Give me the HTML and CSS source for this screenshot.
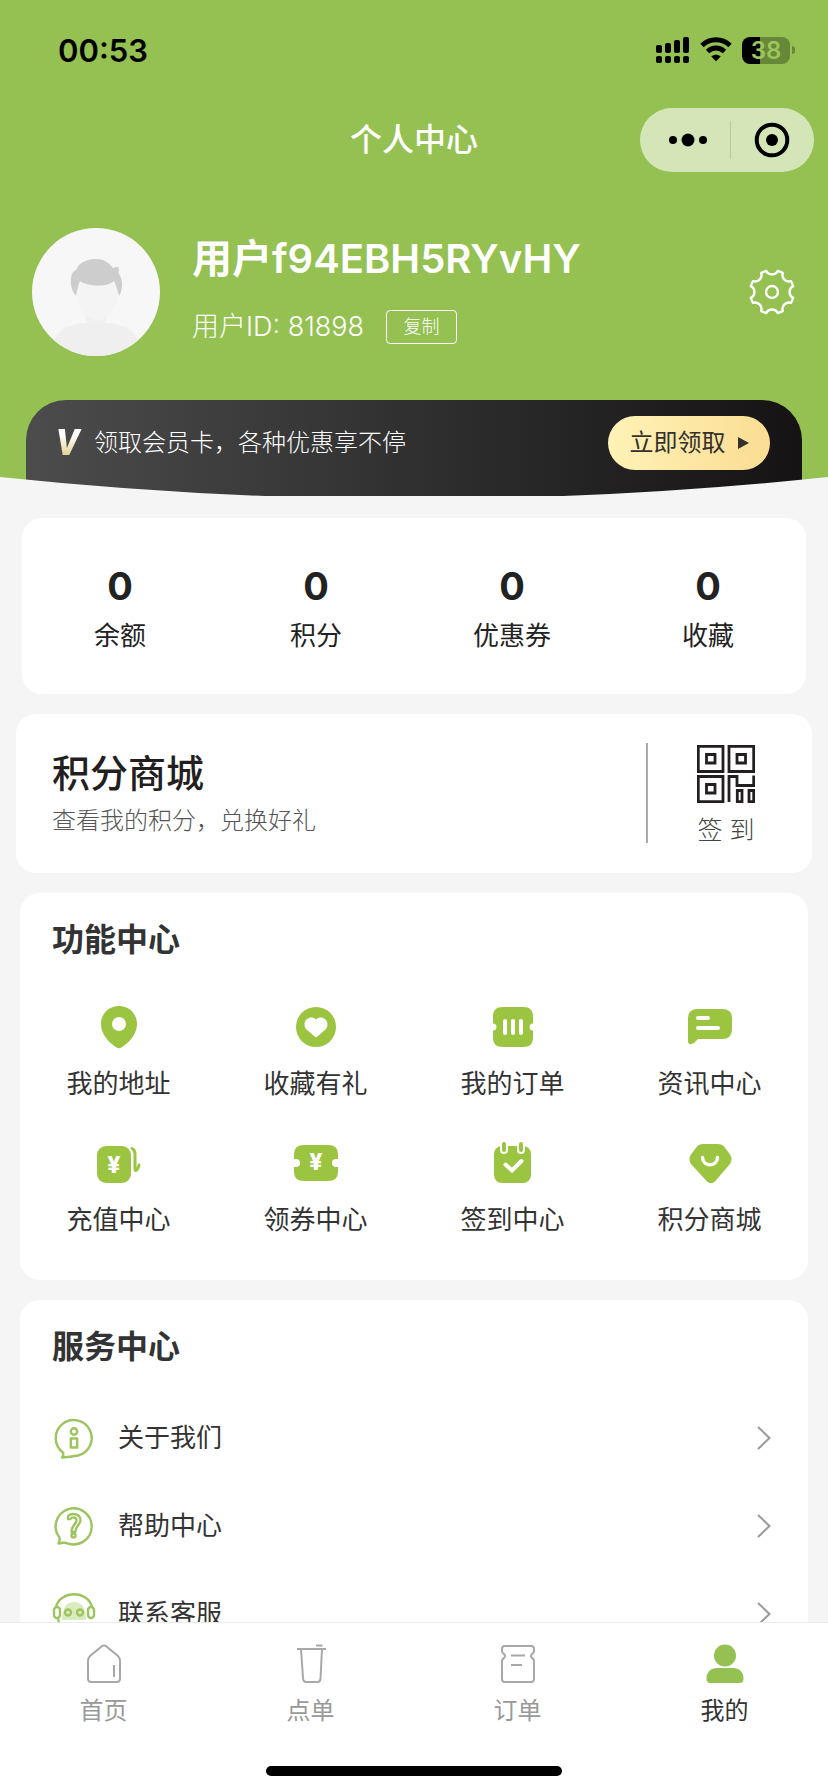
FILE: index.html
```html
<!DOCTYPE html>
<html lang="zh-CN">
<head>
<meta charset="utf-8">
<meta name="viewport" content="width=device-width, initial-scale=1">
<title>个人中心</title>
<link rel="stylesheet" href="styles.css">
</head>
<body>
<div class="app">
  <main class="content">
    <header class="hero">
      <div class="status">
        <time class="clock">00:53</time>
        <div class="indicators">
          <svg width="34" height="28" viewBox="0 0 34 28" aria-hidden="true">
            <rect x="0" y="9" width="6" height="8" rx="2"/><rect x="9" y="7" width="6" height="10" rx="2"/><rect x="18" y="4" width="6" height="13" rx="2"/><rect x="27" y="1" width="6" height="16" rx="2"/>
            <rect x="0" y="20" width="6" height="7" rx="2"/><rect x="9" y="20" width="6" height="7" rx="2"/><rect x="18" y="20" width="6" height="7" rx="2"/><rect x="27" y="20" width="6" height="7" rx="2"/>
          </svg>
          <svg width="32" height="28" viewBox="0 0 32 28" aria-hidden="true">
            <path d="M2 9.5C10 1.8 22 1.8 30 9.500M7.500 15.500C12.500 10.800 19.500 10.800 24.500 15.500" fill="none" stroke="#000" stroke-width="4.800"/>
            <path d="M16 25.200L11.300 20.500C14 18 18 18 20.700 20.500Z"/>
          </svg>
          <div class="battery"><span class="battery-body">38</span><span class="battery-tip"></span></div>
        </div>
      </div>
      <div class="navbar">
        <h1 class="page-title">个人中心</h1>
        <div class="capsule">
          <button class="capsule-btn capsule-more" type="button" aria-label="更多">
            <svg width="40" height="16" viewBox="0 0 40 16"><circle cx="5" cy="8" r="4"/><circle cx="20" cy="8" r="6.500"/><circle cx="35" cy="8" r="4"/></svg>
          </button>
          <span class="capsule-line"></span>
          <button class="capsule-btn" type="button" aria-label="关闭">
            <svg width="36" height="36" viewBox="0 0 36 36"><circle cx="18" cy="18" r="15.300" fill="none" stroke="#000" stroke-width="4"/><circle cx="18" cy="18" r="6"/></svg>
          </button>
        </div>
      </div>
      <section class="profile">
        <svg class="avatar" viewBox="0 0 128 128" role="img" aria-label="头像">
          <rect width="128" height="128" fill="#f7f7f7"/>
          <path d="M22 128V113C25 101 38 96 53 95H75C91 96 103 101 106 113V128Z" fill="#efefef"/>
          <path d="M54 82H74V93C71 97 57 97 54 93Z" fill="#f0f0f0"/>
          <path d="M45 62C45 40 86 40 86 62C86 80 76 92 65 92C54 92 45 80 45 62Z" fill="#f4f4f4"/>
          <path d="M44 68C38 62 38 50 40 46C41 43 44 43 45 40C49 32 60 31 64 31C73 31 78 36 81 40C83 40 85 38 86 39C88 41 86 44 87 46C91 51 91 62 87 68C86 63 84 57 82 53C75 60 53 58 48 53C46 57 45 63 44 68Z" fill="#cdcdcd"/>
        </svg>
        <div class="identity">
          <h2 class="username">用户f94EBH5RYvHY</h2>
          <div class="id-row"><span>用户ID: 81898</span><button class="copy" type="button">复制</button></div>
        </div>
        <button class="settings" type="button" aria-label="设置">
          <svg width="48" height="48" viewBox="0 0 48 48" fill="none" stroke="#fff" stroke-width="2.400" stroke-linejoin="round"><path d="M29.900 2.800L34.800 4.900A6.600 6.600 0 0 0 43.100 13.200L45.200 18.100A6.600 6.600 0 0 0 45.200 29.900L43.100 34.800A6.600 6.600 0 0 0 34.800 43.100L29.900 45.200A6.600 6.600 0 0 0 18.100 45.200L13.200 43.100A6.600 6.600 0 0 0 4.900 34.800L2.800 29.900A6.600 6.600 0 0 0 2.800 18.100L4.900 13.200A6.600 6.600 0 0 0 13.200 4.900L18.100 2.800A6.600 6.600 0 0 0 29.900 2.800Z"/><circle cx="24" cy="24" r="6"/></svg>
        </button>
      </section>
      <section class="member">
        <span class="member-mark">V</span>
        <p class="member-text">领取会员卡，各种优惠享不停</p>
        <button class="claim" type="button">立即领取<svg width="11" height="12" viewBox="0 0 11 12" aria-hidden="true"><path d="M0 0L11 6L0 12Z" fill="#33302e"/></svg></button>
      </section>
      <svg class="curve" viewBox="0 0 828 20" preserveAspectRatio="none" aria-hidden="true"><path d="M0 0Q414 46 828 0V20H0Z" fill="#f5f5f5"/></svg>
    </header>

    <section class="card stats">
      <a class="stat" href="#balance"><strong class="stat-num">0</strong><span class="stat-label">余额</span></a>
      <a class="stat" href="#points"><strong class="stat-num">0</strong><span class="stat-label">积分</span></a>
      <a class="stat" href="#coupons"><strong class="stat-num">0</strong><span class="stat-label">优惠券</span></a>
      <a class="stat" href="#favorites"><strong class="stat-num">0</strong><span class="stat-label">收藏</span></a>
    </section>

    <section class="card mall">
      <a class="mall-info" href="#mall"><h2 class="mall-title">积分商城</h2><p class="mall-sub">查看我的积分，兑换好礼</p></a>
      <a class="checkin" href="#checkin">
        <svg width="58" height="58" viewBox="0 0 58 58" fill="none" stroke="#231f20" stroke-width="2.800" aria-hidden="true">
          <path d="M1.300 1.300H26V26.500H1.300ZM9.500 9.500H18V18H9.500ZM32 1.300H56.700V26.500H32ZM40 9.500H48.500V18H40ZM1.300 31.500H26V56.700H1.300ZM9.500 39.500H18V48H9.500ZM32 57V31.500H40V40.500H56.700V30.500M40.300 45.500H45V56.700H40.300ZM52 45.500H56.700V56.700H52Z"/>
        </svg>
        <span class="checkin-label">签 到</span>
      </a>
    </section>

    <section class="card features">
      <h2 class="card-title">功能中心</h2>
      <nav class="grid">
        <a class="feature" href="#address">
          <svg class="feature-icon" viewBox="0 0 48 48"><path fill-rule="evenodd" d="M24 3C34.500 3 42 11 42 21C42 31 34 40 26.500 44.500Q24 46 21.500 44.500C14 40 6 31 6 21C6 11 13.500 3 24 3ZM24 14A7 7 0 1 0 24 28A7 7 0 1 0 24 14Z"/></svg>
          <span>我的地址</span></a>
        <a class="feature" href="#gift">
          <svg class="feature-icon" viewBox="0 0 48 48"><circle cx="24" cy="24" r="20"/><path fill="#fff" d="M24 16.500C27 13.500 31 14.500 33 16C36.500 19 36 24 33.500 26.500L25.300 33.500Q24 34.500 22.700 33.500L14.500 26.500C12 24 11.500 19 15 16C17 14.500 21 13.500 24 16.500Z"/></svg>
          <span>收藏有礼</span></a>
        <a class="feature" href="#orders">
          <svg class="feature-icon" viewBox="0 0 48 48"><path d="M14 4H34C41 4 44 7 44 14V20.500A3.500 3.500 0 0 0 44 27.500V34C44 41 41 44 34 44H14C7 44 4 41 4 34V27.500A3.500 3.500 0 0 0 4 20.500V14C4 7 7 4 14 4Z"/><path d="M16 18V30M24 18V30M32 18V30" stroke="#fff" stroke-width="4" stroke-linecap="round"/></svg>
          <span>我的订单</span></a>
        <a class="feature" href="#news">
          <svg class="feature-icon" viewBox="0 0 48 48"><path d="M12 6H36Q46 6 46 15V26Q46 36 36 36H12L8 40Q2 43 2 38V15Q2 6 12 6Z"/><path d="M12 15H22M12 25H32" stroke="#fff" stroke-width="4" stroke-linecap="round"/></svg>
          <span>资讯中心</span></a>
        <a class="feature" href="#recharge">
          <svg class="feature-icon" viewBox="0 0 48 48"><rect x="2" y="7" width="34" height="37" rx="9"/><path d="M37 9.500C40 11 40 13 40 16V30C40 33 43 31 44 26" fill="none" stroke="#9bc441" stroke-width="3" stroke-linecap="round" stroke-linejoin="round"/><text class="yen" x="19" y="34">¥</text></svg>
          <span>充值中心</span></a>
        <a class="feature" href="#voucher">
          <svg class="feature-icon" viewBox="0 0 48 48"><path d="M12 6H36Q46 6 46 15V20H44A4 4 0 0 0 44 28H46V33Q46 42 36 42H12Q2 42 2 33V28H4A4 4 0 0 0 4 20H2V15Q2 6 12 6Z"/><text class="yen" x="24" y="31">¥</text></svg>
          <span>领券中心</span></a>
        <a class="feature" href="#signin">
          <svg class="feature-icon" viewBox="0 0 48 48"><rect x="5" y="7" width="37" height="37" rx="8"/><path d="M15 4V11M32 4V11" stroke="#fff" stroke-width="8" stroke-linecap="round"/><path d="M15 5V11M32 5V11" stroke="#9bc441" stroke-width="4" stroke-linecap="round"/><path d="M16.500 25.500L23 31.500L32.500 22" fill="none" stroke="#fff" stroke-width="4" stroke-linecap="round" stroke-linejoin="miter"/></svg>
          <span>签到中心</span></a>
        <a class="feature" href="#shop">
          <svg class="feature-icon" viewBox="0 0 48 48"><path d="M17 5H32Q36 5 38.500 8L44 15.500Q47 20 44 25L29 42.500Q25 46 21 42.500L5 25Q2 20 5 15.500L10.500 8Q13 5 17 5Z"/><path d="M16.500 18.500C17 28 31 28 31.500 18.500" fill="none" stroke="#fff" stroke-width="3.500" stroke-linecap="round"/></svg>
          <span>积分商城</span></a>
      </nav>
    </section>

    <section class="card services">
      <h2 class="card-title">服务中心</h2>
      <nav class="service-list">
        <a class="service" href="#about">
          <svg class="service-icon" viewBox="0 0 44 44"><path d="M11 36.500A18 18 0 1 1 26 39.500Q18 41 10 41.500Q12 39.500 11 36.500Z"/><circle cx="22" cy="15.500" r="3.200"/><rect x="18.800" y="22.500" width="6.400" height="9"/></svg>
          <span class="service-name">关于我们</span>
          <svg class="chevron" viewBox="0 0 16 26"><path d="M2 2L13.500 13L2 24"/></svg></a>
        <a class="service" href="#help">
          <svg class="service-icon" viewBox="0 0 44 44"><path d="M7.500 33.500A18 18 0 1 1 16 39.500Q12 38 6.500 39.500Q8 36.500 7.500 33.500Z"/><path d="M16 15V12C19 9 28 9 28.500 16C28.500 21 23 22 23.500 28H19.500C19 22 24.500 20 24.500 16.500C24.500 13 20 12.500 18.500 15Z"/><circle cx="21.500" cy="31.500" r="2"/></svg>
          <span class="service-name">帮助中心</span>
          <svg class="chevron" viewBox="0 0 16 26"><path d="M2 2L13.500 13L2 24"/></svg></a>
        <a class="service" href="#contact">
          <svg class="service-icon" viewBox="0 0 44 44"><path d="M22 10C33 10 34 22 34 28H10C10 22 11 10 22 10Z" fill="#d9ebbf" stroke="none"/><path d="M4 15C8 -2 36 -2 40 15"/><rect x="2" y="15" width="6" height="11" rx="3"/><rect x="36" y="15" width="6" height="11" rx="3"/><circle cx="16" cy="20.500" r="3"/><circle cx="28" cy="20.500" r="3"/><path d="M6 27C8 36 15 38 20 38"/></svg>
          <span class="service-name">联系客服</span>
          <svg class="chevron" viewBox="0 0 16 26"><path d="M2 2L13.500 13L2 24"/></svg></a>
      </nav>
    </section>
  </main>

  <footer class="tabbar">
    <nav class="tabs">
      <a class="tab" href="#home"><svg class="tab-icon" viewBox="0 0 40 40"><path d="M4 17Q4 14 6 12L17.500 2.500Q20 .500 22.500 2.500L34 12Q36 14 36 17V34.500Q36 38 32.500 38H7.500Q4 38 4 34.500ZM30 21V33"/></svg><span>首页</span></a>
      <a class="tab" href="#menu"><svg class="tab-icon" viewBox="0 0 40 40"><path d="M6 5H35M25 1.500H31.500M10 5L12 34Q12 38 15.500 38H26.500Q29 38 29.500 35L31 5"/></svg><span>点单</span></a>
      <a class="tab" href="#order"><svg class="tab-icon" viewBox="0 0 40 40"><path d="M7 2H33Q36 2 36 5V7Q36 9 34 10Q32 12 34 14Q36 15 36 17V35Q36 38 33 38H7Q4 38 4 35V17Q4 15 6 14Q8 12 6 10Q4 9 4 7V5Q4 2 7 2ZM13 11.500H27M13 21H24"/></svg><span>订单</span></a>
      <a class="tab tab-active" href="#me" aria-current="page"><svg class="tab-icon" viewBox="0 0 40 40"><circle cx="20" cy="11.500" r="11"/><path d="M11 24H29Q38.500 25 38.500 35Q38.500 39 34.500 39H5.500Q1.500 39 1.500 35Q1.500 25 11 24Z"/></svg><span>我的</span></a>
    </nav>
    <div class="home-bar"></div>
  </footer>
</div>
</body>
</html>
```

FILE: styles.css
```css
* {
  box-sizing: border-box;
}

body {
  margin: 0;
  background: #f5f5f5;
  color: #333;
  font-family: Inter, "Noto Sans CJK SC", sans-serif;
  font-size: 26px;
}

h1, h2, p {
  margin: 0;
}

a {
  color: inherit;
  text-decoration: none;
}

button {
  border: 0;
  padding: 0;
  background: none;
  color: inherit;
  font: inherit;
}

svg {
  display: block;
  flex: none;
}

.app {
  display: flex;
  flex-direction: column;
  height: 100vh;
}

.content {
  flex: 1;
  min-height: 0;
  overflow-y: auto;
  scrollbar-width: none;
}

/* Header */
.hero {
  position: relative;
  background: #94c151;
  color: #fff;
}

.status {
  display: flex;
  align-items: center;
  justify-content: space-between;
  height: 100px;
  padding: 0 33px 0 58px;
  color: #000;
}

.clock {
  font-size: 31px;
  font-weight: 600;
}

.indicators {
  display: flex;
  align-items: center;
  gap: 10px;
}

.battery {
  display: flex;
  align-items: center;
  gap: 2px;
}

.battery-body {
  width: 48px;
  border-radius: 8px;
  background: linear-gradient(90deg, #000 38%, #678739 38%);
  color: #9cc65c;
  font-size: 24px;
  font-weight: 600;
  line-height: 27px;
  text-align: center;
}

.battery-tip {
  width: 3px;
  height: 8px;
  border-radius: 0 4px 4px 0;
  background: #678739;
}

.navbar {
  display: grid;
  grid-template-columns: 1fr auto 1fr;
  align-items: center;
  height: 80px;
  padding: 0 14px;
}

.page-title {
  grid-column: 2;
  font-size: 32px;
  font-weight: 500;
  line-height: 48px;
}

.capsule {
  display: flex;
  align-items: center;
  justify-self: end;
  width: 174px;
  height: 64px;
  border-radius: 32px;
  background: #d4e6b8;
}

.capsule-btn {
  display: flex;
  flex: 1;
  align-items: center;
  justify-content: center;
  height: 100%;
}

.capsule-more {
  padding-left: 6px;
}

.capsule-line {
  width: 1px;
  height: 38px;
  background: #b5c89a;
}

.profile {
  display: flex;
  align-items: center;
  gap: 32px;
  padding: 48px 32px 44px;
}

.avatar {
  width: 128px;
  height: 128px;
  border-radius: 50%;
}

.identity {
  flex: 1;
  align-self: flex-start;
  padding-top: 4px;
}

.username {
  font-size: 40px;
  font-weight: 600;
  line-height: 54px;
}

.id-row {
  display: flex;
  align-items: center;
  gap: 22px;
  margin-top: 24px;
  font-size: 27px;
  font-weight: 300;
  line-height: 34px;
}

.copy {
  width: 71px;
  height: 34px;
  border: 1px solid #fff;
  border-radius: 4px;
  font-size: 18px;
  line-height: 32px;
}

.settings {
  flex: none;
}

.member {
  display: flex;
  align-items: center;
  height: 96px;
  margin: 0 26px;
  padding: 0 32px 10px 30px;
  border-radius: 40px 40px 0 0;
  background: linear-gradient(90deg, #4c4c4c, #151313);
}

.member-mark {
  width: 38px;
  background: linear-gradient(#fff 30%, #e5d69c 75%);
  background-clip: text;
  color: transparent;
  font: italic 900 36px/42px Roboto, sans-serif;
}

.member-text {
  flex: 1;
  font-size: 24px;
  font-weight: 300;
  line-height: 36px;
}

.claim {
  display: flex;
  align-items: center;
  justify-content: center;
  gap: 12px;
  width: 162px;
  height: 54px;
  border-radius: 27px;
  background: linear-gradient(100deg, #fff3b8, #fbdc92);
  color: #33302e;
  font-size: 24px;
  line-height: 36px;
}

.curve {
  position: absolute;
  bottom: 0;
  left: 0;
  width: 100%;
  height: 19px;
}

/* Cards */
.card {
  margin: 20px 20px 0;
  border-radius: 20px;
  background: #fff;
}

.card-title {
  font-size: 32px;
  font-weight: 700;
  line-height: 42px;
}

.stats {
  display: grid;
  grid-template-columns: repeat(4, 1fr);
  margin: 22px 22px 0;
  padding: 44px 0 40px;
  color: #222;
  text-align: center;
}

.stat-num,
.stat-label {
  display: block;
}

.stat-num {
  font-size: 38px;
  font-weight: 700;
  line-height: 48px;
}

.stat-label {
  margin-top: 8px;
  line-height: 36px;
}

.mall {
  display: flex;
  align-items: center;
  justify-content: space-between;
  margin: 20px 16px 0;
  padding: 29px 16px 30px 36px;
}

.mall-title {
  color: #231f20;
  font-size: 38px;
  font-weight: 500;
  line-height: 52px;
}

.mall-sub {
  margin-top: 4px;
  color: #555;
  font-size: 24px;
  font-weight: 300;
  line-height: 36px;
}

.checkin {
  display: flex;
  flex-direction: column;
  align-items: center;
  width: 150px;
  height: 100px;
  padding: 2px 0 0 8px;
  border-left: 2px solid #aaa;
}

.checkin-label {
  margin-top: 12px;
  color: #444;
  font-size: 25px;
  font-weight: 300;
  line-height: 30px;
}

.features {
  padding: 26px 0 43px;
}

.features .card-title {
  padding-left: 32px;
}

.grid {
  display: grid;
  grid-template-columns: repeat(4, 1fr);
  row-gap: 38px;
  margin-top: 42px;
}

.feature {
  display: flex;
  flex-direction: column;
  align-items: center;
  gap: 16px;
  line-height: 34px;
}

.feature-icon {
  width: 48px;
  height: 48px;
  fill: #9bc441;
}

.yen {
  fill: #fff;
  font-size: 23px;
  font-weight: 800;
  text-anchor: middle;
}

.services {
  margin-top: 20px;
  padding: 26px 36px 32px 32px;
}

.service-list {
  margin-top: 26px;
}

.service {
  display: flex;
  align-items: center;
  height: 88px;
}

.service-icon {
  width: 44px;
  height: 44px;
  fill: none;
  stroke: #9dc45f;
  stroke-width: 2.4;
  stroke-linejoin: round;
}

.service-name {
  flex: 1;
  margin-left: 22px;
  line-height: 34px;
}

.chevron {
  width: 16px;
  height: 26px;
  fill: none;
  stroke: #999;
  stroke-width: 2;
}

/* Bottom navigation */
.tabbar {
  flex: none;
  padding: 21px 0 16px;
  border-top: 1px solid #ebebeb;
  background: #fff;
}

.tabs {
  display: grid;
  grid-template-columns: repeat(4, 1fr);
}

.tab {
  display: flex;
  flex-direction: column;
  align-items: center;
  gap: 10px;
  color: #999;
  font-size: 24px;
  line-height: 34px;
}

.tab-icon {
  width: 40px;
  height: 40px;
  fill: none;
  stroke: #a8a8a8;
  stroke-width: 2;
}

.tab-active {
  color: #333;
}

.tab-active .tab-icon {
  fill: #94c151;
  stroke: none;
}

.home-bar {
  width: 296px;
  height: 10px;
  margin: 38px auto 0;
  border-radius: 5px;
  background: #000;
}
```
